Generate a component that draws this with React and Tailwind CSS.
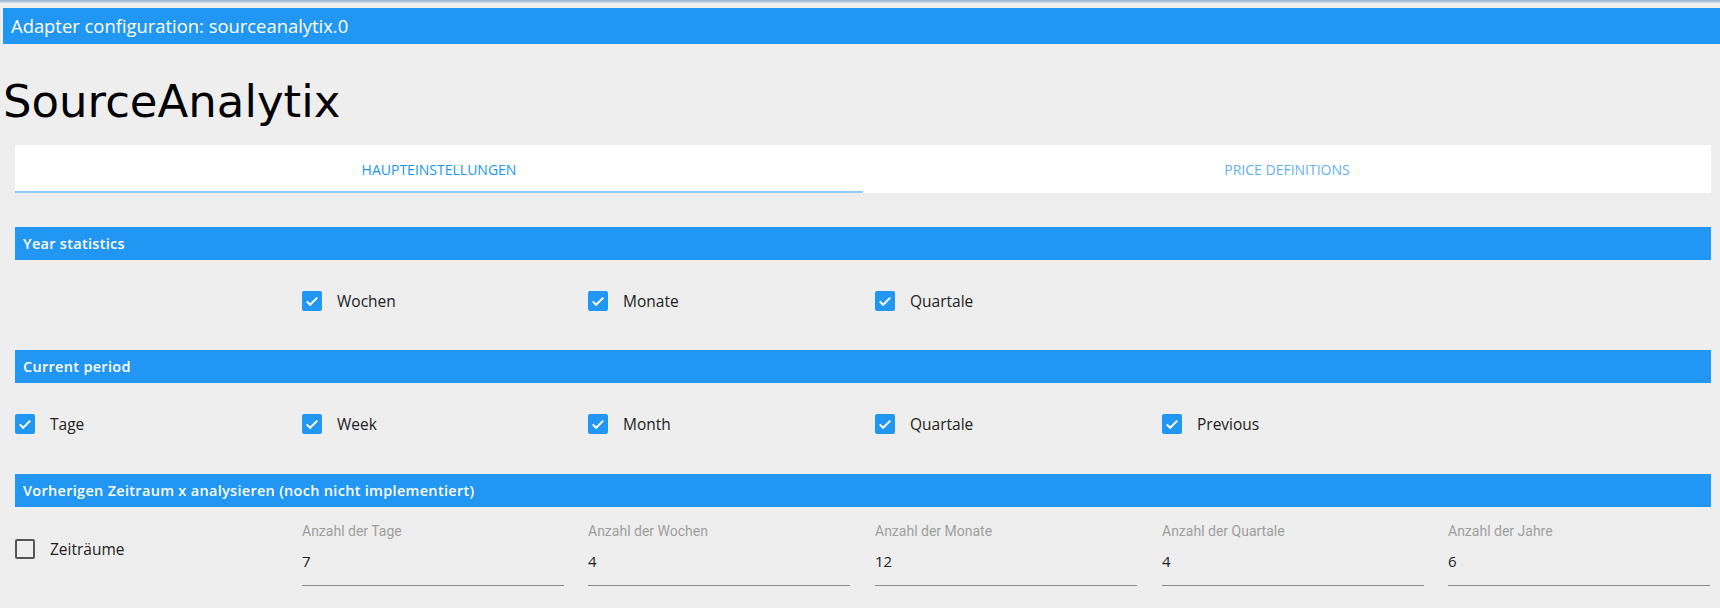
import React from 'react';

const Check = ({ checked }) =>
  checked ? (
    <span className="flex h-[20px] w-[20px] shrink-0 items-center justify-center rounded-[2px] bg-[#2196f3]">
      <svg viewBox="0 0 24 24" className="h-[18px] w-[18px]" fill="none" stroke="white" strokeWidth="2.6">
        <path d="M5 12.5l4.5 4.5L19 7.5" />
      </svg>
    </span>
  ) : (
    <span className="h-[20px] w-[20px] shrink-0 rounded-[2px] border-2 border-[#555]" />
  );

const CheckItem = ({ label, checked = true, className = '' }) => (
  <label className={`flex items-center gap-[15px] text-[15.5px] leading-[20px] text-[#222] ${className}`}>
    <Check checked={checked} />
    <span>{label}</span>
  </label>
);

const Section = ({ title }) => (
  <div className="flex h-[33px] items-center bg-[#2196f3] px-[8px] text-[14.5px] font-semibold tracking-[0.3px] text-white">
    {title}
  </div>
);

const Field = ({ label, value }) => (
  <div className="w-[262px]">
    <div className="font-['Roboto',sans-serif] text-[14px] leading-[16px] text-[#9e9e9e]">{label}</div>
    <div className="mt-[12px] border-b border-[#8a8a8a] pb-[14px] text-[15px] leading-[20px] text-[#222]">{value}</div>
  </div>
);

const cols = 'grid grid-cols-[287px_286px_287px_287px_286px_263px]';

export default function App() {
  return (
    <div className="min-h-[608px] bg-[#eeeeee] font-['Open_Sans',sans-serif]">
      <div className="h-[3px] bg-gradient-to-b from-[#8fb0d0] to-[#d6e0ea]" />
      <div className="ml-[3px] mt-[5px] flex h-[36px] items-center bg-[#2196f3] px-[8px] text-[18.4px] text-white">
        Adapter configuration: sourceanalytix.0
      </div>

      <h1 className="ml-[3px] mt-[32px] font-['DejaVu_Sans',sans-serif] text-[45px] leading-[52px] text-black">
        SourceAnalytix
      </h1>

      <div className="ml-[15px] mr-[9px] mt-[17px]">
        <div className="flex h-[48px] bg-white text-[14px]">
          <div className="flex flex-1 items-center justify-center border-b-2 border-[#90caf9] pt-[2px] text-[#2196f3]">
            HAUPTEINSTELLUNGEN
          </div>
          <div className="flex flex-1 items-center justify-center text-[#64b1f2]">PRICE DEFINITIONS</div>
        </div>

        <div className="mt-[34px]">
          <Section title="Year statistics" />
          <div className={`${cols} h-[90px] items-start pt-[31px]`}>
            <div />
            <CheckItem label="Wochen" />
            <CheckItem label="Monate" />
            <CheckItem label="Quartale" />
          </div>
        </div>

        <div>
          <Section title="Current period" />
          <div className={`${cols} h-[91px] items-start pt-[31px]`}>
            <CheckItem label="Tage" />
            <CheckItem label="Week" />
            <CheckItem label="Month" />
            <CheckItem label="Quartale" />
            <CheckItem label="Previous" />
          </div>
        </div>

        <div>
          <Section title="Vorherigen Zeitraum x analysieren (noch nicht implementiert)" />
          <div className={`${cols} items-start pt-[16px]`}>
            <CheckItem label="Zeiträume" checked={false} className="mt-[16px]" />
            <Field label="Anzahl der Tage" value="7" />
            <Field label="Anzahl der Wochen" value="4" />
            <Field label="Anzahl der Monate" value="12" />
            <Field label="Anzahl der Quartale" value="4" />
            <Field label="Anzahl der Jahre" value="6" />
          </div>
        </div>
      </div>
    </div>
  );
}
